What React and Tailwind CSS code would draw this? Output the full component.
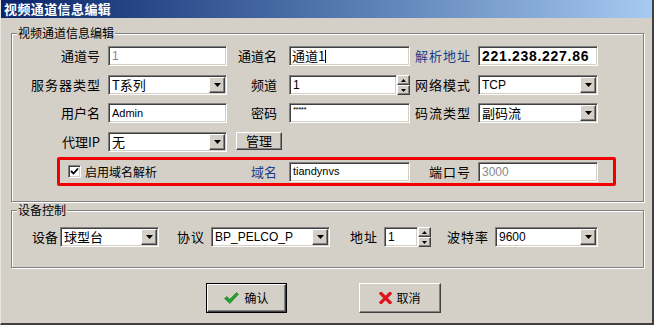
import React from "react";

const CJK = "font-['Noto_Sans_CJK_SC','Noto_Sans',sans-serif]";
const LAT = "font-['Liberation_Sans','Noto_Sans_CJK_SC',sans-serif]";

function Sunken({ className = "", children }) {
  return (
    <div
      className={`box-border bg-white border border-t-[#808080] border-l-[#808080] border-r-white border-b-white shadow-[inset_1px_1px_0_#404040,inset_-1px_-1px_0_#d4d0c8] flex items-center overflow-hidden ${className}`}
    >
      {children}
    </div>
  );
}

function Raised({ className = "", children }) {
  return (
    <div
      className={`box-border bg-[#d4d0c8] border border-t-white border-l-white border-r-[#404040] border-b-[#404040] shadow-[inset_-1px_-1px_0_#808080] flex items-center justify-center ${className}`}
    >
      {children}
    </div>
  );
}

function DropBtn() {
  return (
    <Raised className="w-[16px] h-[16px] ml-auto mr-[1px] shrink-0">
      <svg width="7" height="4" viewBox="0 0 7 4">
        <polygon points="0,0 7,0 3.5,4" fill="#000" />
      </svg>
    </Raised>
  );
}

function Select({ className = "", text, textClass = "" }) {
  return (
    <Sunken className={`h-[20px] ${className}`}>
      <span className={`pl-[3px] whitespace-nowrap ${textClass}`}>{text}</span>
      <DropBtn />
    </Sunken>
  );
}

function Spinner() {
  return (
    <div className="w-[13px] h-[20px] flex flex-col shrink-0">
      <Raised className="h-[10px] w-[13px]">
        <svg width="5" height="3" viewBox="0 0 5 3">
          <polygon points="0,3 5,3 2.5,0" fill="#000" />
        </svg>
      </Raised>
      <Raised className="h-[10px] w-[13px]">
        <svg width="5" height="3" viewBox="0 0 5 3">
          <polygon points="0,0 5,0 2.5,3" fill="#000" />
        </svg>
      </Raised>
    </div>
  );
}

function Label({ className = "", children }) {
  return (
    <span className={`text-right text-[13px] leading-[20px] shrink-0 whitespace-nowrap ${className}`}>
      {children}
    </span>
  );
}

export default function App() {
  return (
    <div
      className={`w-[654px] h-[325px] bg-[#d4d0c8] flex flex-col border-r-2 border-b-2 border-r-[#404040] border-b-[#404040] border-l border-l-[#e8e6e0] text-black ${CJK}`}
    >
      <div className="h-[18px] shrink-0 bg-linear-to-r from-[#0a246a] to-[#a6caf0] text-white font-bold text-[13px] leading-[18px] pl-[3px] tracking-[0.4px]">
        视频通道信息编辑
      </div>

      {/* Group 1 */}
      <div className="ml-[10px] mt-[15px] w-[633px] h-[169px] shrink-0 relative border border-[#808080] shadow-[inset_1px_1px_0_#fff,1px_1px_0_#fff] pt-[12px]">
        <span className="absolute top-[-8px] left-[5px] px-[1px] bg-[#d4d0c8] text-[12px] leading-[14px]">
          视频通道信息编辑
        </span>

        {/* Row 1 */}
        <div className="flex items-center h-[20px]">
          <Label className="w-[88px]">通道号</Label>
          <Sunken className="ml-[8px] w-[119px] h-[20px]">
            <span className={`pl-[3px] text-[12px] text-[#8a8a8a] ${LAT}`}>1</span>
          </Sunken>
          <Label className="w-[50px]">通道名</Label>
          <Sunken className="ml-[12px] w-[121px] h-[20px]">
            <span className="pl-[2px] text-[13px]">通道1</span>
            <span className="w-px h-[13px] bg-black" />
          </Sunken>
          <Label className="w-[61px] text-[#1f3c8a] tracking-[1px]">解析地址</Label>
          <Sunken className="ml-[7px] w-[120px] h-[20px]">
            <span className={`pl-[3px] text-[14px] font-bold tracking-[0.7px] ${LAT}`}>221.238.227.86</span>
          </Sunken>
        </div>

        {/* Row 2 */}
        <div className="flex items-center h-[20px] mt-[9px]">
          <Label className="w-[89px] tracking-[1px]">服务器类型</Label>
          <Select className="ml-[7px] w-[119px]" text="T系列" textClass="text-[13px]" />
          <Label className="w-[50px]">频道</Label>
          <Sunken className="ml-[12px] w-[108px] h-[20px]">
            <span className={`pl-[3px] text-[12px] ${LAT}`}>1</span>
          </Sunken>
          <Spinner />
          <Label className="w-[61px] tracking-[1px]">网络模式</Label>
          <Select className="ml-[7px] w-[120px]" text="TCP" textClass={`text-[12px] ${LAT}`} />
        </div>

        {/* Row 3 */}
        <div className="flex items-center h-[20px] mt-[8px]">
          <Label className="w-[88px]">用户名</Label>
          <Sunken className="ml-[8px] w-[119px] h-[20px]">
            <span className={`pl-[3px] text-[11px] ${LAT}`}>Admin</span>
          </Sunken>
          <Label className="w-[50px]">密码</Label>
          <Sunken className="ml-[12px] w-[121px] h-[20px] items-start">
            <span className={`pl-[3px] pt-[1px] text-[8px] leading-[10px] tracking-[-0.5px] ${LAT}`}>*****</span>
          </Sunken>
          <Label className="w-[61px] tracking-[1px]">码流类型</Label>
          <Select className="ml-[7px] w-[120px]" text="副码流" textClass="text-[13px]" />
        </div>

        {/* Row 4 */}
        <div className="flex items-start h-[20px] mt-[9px]">
          <Label className="w-[88px]">代理IP</Label>
          <Select className="ml-[8px] w-[119px]" text="无" textClass="text-[13px]" />
          <Raised className="ml-[9px] w-[46px] h-[18px]">
            <span className="text-[13px] leading-[16px]">管理</span>
          </Raised>
        </div>

        {/* Red box */}
        <div className="ml-[45px] mt-[5px] w-[559px] h-[29px] border-[3px] border-[#f00000] rounded-[2px] flex items-center">
          <div className="w-[217px] flex items-center pl-[8px]">
            <Sunken className="w-[13px] h-[13px] justify-center shrink-0">
              <svg width="9" height="9" viewBox="0 0 9 9">
                <path d="M1 4 L3.5 6.5 L8 1.5" stroke="#000" strokeWidth="1.8" fill="none" />
              </svg>
            </Sunken>
            <span className="ml-[4px] text-[12px] leading-[16px]">启用域名解析</span>
            <span className="ml-auto text-[13px] leading-[16px] text-[#1f3c8a]">域名</span>
          </div>
          <Sunken className="ml-[12px] w-[121px] h-[20px]">
            <span className={`pl-[3px] text-[11px] ${LAT}`}>tiandynvs</span>
          </Sunken>
          <Label className="w-[61px] tracking-[1px]">端口号</Label>
          <Sunken className="ml-[7px] w-[120px] h-[20px] bg-[#f6f5f2]">
            <span className={`pl-[3px] text-[12px] text-[#8a8a8a] ${LAT}`}>3000</span>
          </Sunken>
        </div>
      </div>

      {/* Group 2 */}
      <div className="ml-[10px] mt-[8px] w-[633px] h-[58px] shrink-0 relative border border-[#808080] shadow-[inset_1px_1px_0_#fff,1px_1px_0_#fff] pt-[16px]">
        <span className="absolute top-[-8px] left-[5px] px-[1px] bg-[#d4d0c8] text-[12px] leading-[14px]">
          设备控制
        </span>
        <div className="flex items-center h-[20px]">
          <Label className="w-[46px]">设备</Label>
          <Select className="ml-[2px] w-[99px]" text="球型台" textClass="text-[13px]" />
          <Label className="w-[46px] tracking-[1px]">协议</Label>
          <Select className="ml-[6px] w-[119px]" text="BP_PELCO_P" textClass={`text-[12px] ${LAT}`} />
          <Label className="w-[48px] tracking-[1px]">地址</Label>
          <Sunken className="ml-[6px] w-[34px] h-[20px]">
            <span className={`pl-[3px] text-[12px] ${LAT}`}>1</span>
          </Sunken>
          <Spinner />
          <Label className="w-[58px] tracking-[1px]">波特率</Label>
          <Select className="ml-[6px] w-[103px]" text="9600" textClass={`text-[12px] ${LAT}`} />
        </div>
      </div>

      {/* Buttons */}
      <div className="flex mt-[15px] pl-[205px] gap-[72px]">
        <div className="w-[81px] h-[30px] border border-black">
          <Raised className="w-full h-full gap-[5px]">
            <svg width="15" height="12" viewBox="0 0 15 12">
              <path d="M0.5 6.5 L3 4.5 L5.8 7.3 L12.5 0.5 L14.5 2.3 L5.8 11.5 Z" fill="#22a030" stroke="#167a20" strokeWidth="0.6" />
            </svg>
            <span className="text-[12px] leading-[16px]">确认</span>
          </Raised>
        </div>
        <Raised className="w-[82px] h-[30px] gap-[4px]">
          <svg width="13" height="12" viewBox="0 0 13 12">
            <path d="M2 1.5 L11 10.5 M11 1.5 L2 10.5" stroke="#e0141a" strokeWidth="3.2" strokeLinecap="square" />
          </svg>
          <span className="text-[12px] leading-[16px]">取消</span>
        </Raised>
      </div>
    </div>
  );
}
